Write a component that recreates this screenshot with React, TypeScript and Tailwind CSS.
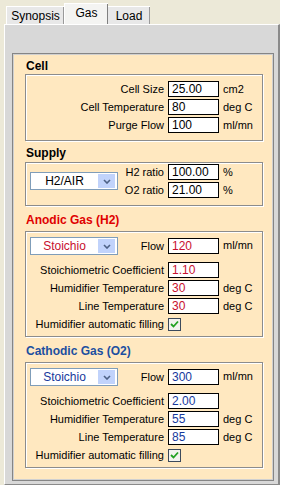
import React from "react";

const narrow = "font-['Liberation_Sans',Arial,sans-serif] text-[11px] leading-[16px] whitespace-nowrap";
const title = "font-['Liberation_Sans',Arial,sans-serif] text-[12px] font-bold leading-[16px]";

function Field({ value, color = "text-black" }: { value: string; color?: string }) {
  return (
    <div className={`h-[16px] w-[51px] border border-black bg-white pl-[3px] text-[12px] leading-[14px] ${color}`}>
      {value}
    </div>
  );
}

function Row({ label, value, unit, color }: { label: string; value: string; unit?: string; color?: string }) {
  return (
    <div className="flex h-[16px] items-center">
      <span className="flex-1 pr-[4px] text-right">{label}</span>
      <Field value={value} color={color} />
      <span className="w-[43px] pl-[4px]">{unit}</span>
    </div>
  );
}

function Combo({ text, color = "text-black" }: { text: string; color?: string }) {
  return (
    <div className="flex h-[18px] w-[88px] items-center border border-[#7f9db9] bg-white">
      <span className={`flex-1 text-center text-[12px] leading-[14px] ${color}`}>{text}</span>
      <div className="mr-[2px] flex h-[14px] w-[17px] items-center justify-center bg-[#c1d3fb]">
        <svg width="8" height="5" viewBox="0 0 8 5">
          <path d="M1 1 L4 4 L7 1" fill="none" stroke="#4d6185" strokeWidth="1.6" />
        </svg>
      </div>
    </div>
  );
}

function Check() {
  return (
    <div className="flex h-[16px] items-center">
      <span className="flex-1 pr-[4px] text-right">Humidifier automatic filling</span>
      <div className="flex h-[13px] w-[13px] items-center justify-center border border-[#3c4a5c] bg-[#f2f2ee]">
        <svg width="9" height="8" viewBox="0 0 9 8">
          <path d="M1 4 L3.5 6.5 L8 1.5" fill="none" stroke="#21a121" strokeWidth="1.8" />
        </svg>
      </div>
      <span className="w-[81px]" />
    </div>
  );
}

const box = "border border-[#8c8c8c] shadow-[1px_1px_0_#ffffff,inset_1px_1px_0_#ffffff]";

function GasSection({
  name,
  titleColor,
  valColor,
  flow,
  coef,
  hum,
  line,
}: {
  name: string;
  titleColor: string;
  valColor: string;
  flow: string;
  coef: string;
  hum: string;
  line: string;
}) {
  return (
    <>
      <div className={`mt-[6px] pl-[1px] ${title} ${titleColor}`}>{name}</div>
      <div className={`mt-[3px] pb-[4px] pt-[4px] ${box}`}>
        <div className="flex h-[20px] items-center">
          <div className="ml-[4px]">
            <Combo text="Stoichio" color={valColor} />
          </div>
          <span className="flex-1 pr-[4px] text-right">Flow</span>
          <Field value={flow} color={valColor} />
          <span className="-mt-[3px] w-[43px] pl-[4px]">ml/mn</span>
        </div>
        <div className="mt-[6px] flex flex-col gap-[2px]">
          <Row label="Stoichiometric Coefficient" value={coef} color={valColor} />
          <Row label="Humidifier Temperature" value={hum} unit="deg C" color={valColor} />
          <Row label="Line Temperature" value={line} unit="deg C" color={valColor} />
          <Check />
        </div>
      </div>
    </>
  );
}

export default function App() {
  return (
    <div className={`h-[491px] w-[286px] overflow-hidden bg-white text-black ${narrow}`}>
      <div className="h-[485px] w-[280px] bg-[#ece9d8]">
        {/* tabs */}
        <div className="flex h-[24px] items-end pl-[6px] text-[12px]">
          <div className="flex h-[18px] w-[58px] items-center justify-center border-l border-t border-white bg-[#e8e8e8] shadow-[inset_-1px_0_0_#9a9a9a]">
            Synopsis
          </div>
          <div className="flex h-[21px] w-[44px] items-center justify-center border-l border-t border-white bg-[#f4f4f2] pb-[2px] shadow-[inset_-1px_0_0_#808080]">
            Gas
          </div>
          <div className="flex h-[18px] w-[42px] items-center justify-center border-t border-white bg-[#e8e8e8] shadow-[inset_-1px_0_0_#9a9a9a]">
            Load
          </div>
        </div>

        {/* tab body */}
        <div className="ml-[4px] h-[461px] w-[276px] border-l border-t border-white border-r-2 border-r-[#8a8a8a] border-b border-b-[#8a8a8a] bg-[#d8d8d8] pl-[7px] pt-[28px]">
          <div className="h-[428px] w-[262px] border border-[#858585] bg-[#d0d0d0] p-px">
            <div className="h-full bg-[#ffe8c0] pl-[11px] pr-[9px] pt-[3px]">
              <div className={`pl-[1px] ${title}`}>Cell</div>
              <div className={`flex flex-col gap-[2px] pb-[7px] pt-[6px] ${box}`}>
                <Row label="Cell Size" value="25.00" unit="cm2" />
                <Row label="Cell Temperature" value="80" unit="deg C" />
                <Row label="Purge Flow" value="100" unit="ml/mn" />
              </div>

              <div className={`mt-[4px] pl-[1px] ${title}`}>Supply</div>
              <div className={`mt-[1px] flex items-center pb-[7px] pt-[1px] ${box}`}>
                <div className="ml-[4px]">
                  <Combo text="H2/AIR" />
                </div>
                <div className="flex flex-1 flex-col gap-[2px]">
                  <Row label="H2 ratio" value="100.00" unit="%" />
                  <Row label="O2 ratio" value="21.00" unit="%" />
                </div>
              </div>

              <GasSection
                name="Anodic Gas (H2)"
                titleColor="text-[#e00000]"
                valColor="text-[#c8102e]"
                flow="120"
                coef="1.10"
                hum="30"
                line="30"
              />
              <GasSection
                name="Cathodic Gas (O2)"
                titleColor="text-[#1c4fa0]"
                valColor="text-[#17399c]"
                flow="300"
                coef="2.00"
                hum="55"
                line="85"
              />
            </div>
          </div>
        </div>
      </div>
    </div>
  );
}
